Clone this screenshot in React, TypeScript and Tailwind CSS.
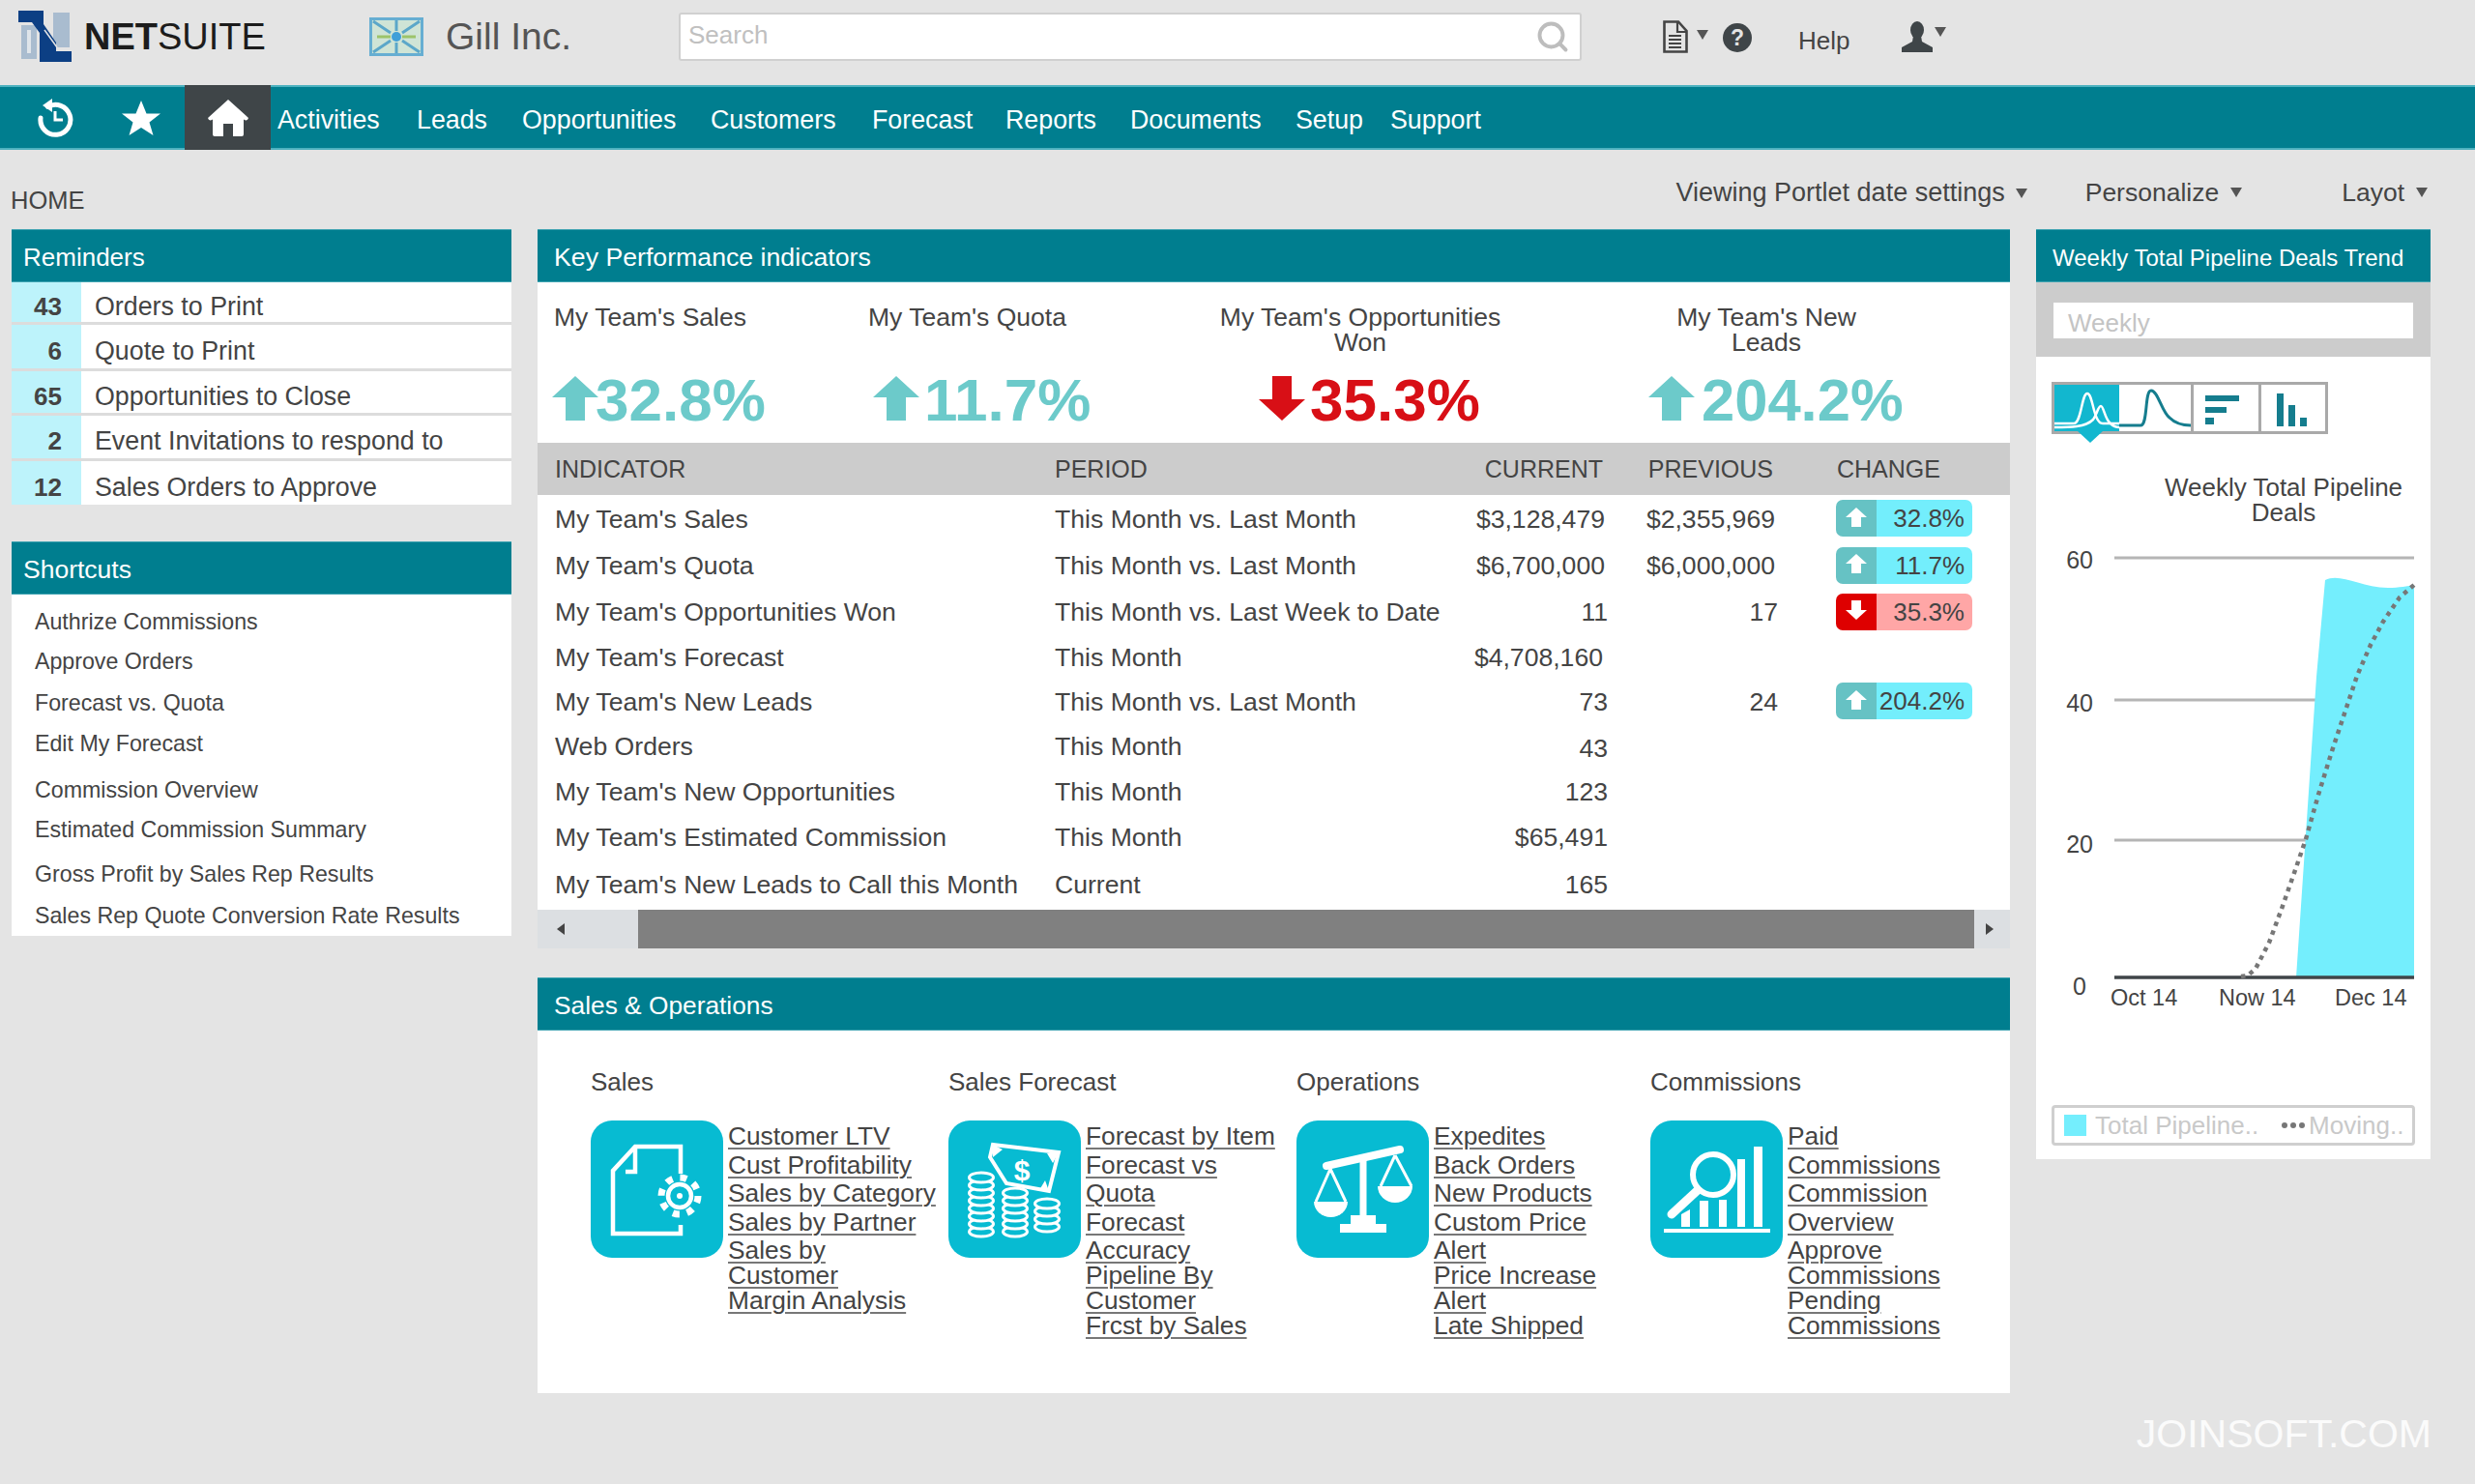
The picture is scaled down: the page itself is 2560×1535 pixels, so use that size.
import React from "react";
import { Search } from "lucide-react";

const TILE = "#07bbd2";

function Caret({ className = "" }: { className?: string }) {
  return (
    <svg viewBox="0 0 12 10" className={`w-[12px] h-[10px] shrink-0 ${className}`}>
      <polygon points="0,0 12,0 6,10" fill="#555" />
    </svg>
  );
}

function NetsuiteLogo() {
  return (
    <svg viewBox="0 0 56 54" className="w-[56px] h-[54px] shrink-0">
      <path d="M3 15H19V50H3Z" fill="#a9bccf" />
      <path d="M36 2H53V38H36Z" fill="#a9bccf" />
      <path d="M9 20H13V44H9Z" fill="#dfe5ea" />
      <path d="M0 0H26V14L39 33V42H55V53H22V23L14 12H0Z" fill="#0c3f84" />
      <path d="M27 20 L40 38" stroke="#e4e4e4" strokeWidth="1.5" fill="none" />
    </svg>
  );
}

function GillLogo() {
  return (
    <svg viewBox="0 0 56 40" className="w-[56px] h-[40px] shrink-0">
      <rect x="1.5" y="1.5" width="53" height="37" fill="#cfe4d6" stroke="#66aed2" strokeWidth="3" />
      <g stroke="#5ba7c9" strokeWidth="3">
        <path d="M4 4L22 16M52 4L34 16M4 36L22 24M52 36L34 24M28 3V14M28 37V26" />
      </g>
      <g stroke="#9cc46a" strokeWidth="3">
        <path d="M8 20H22M34 20H48" />
      </g>
      <circle cx="28" cy="20" r="5" fill="#3f9fd8" />
    </svg>
  );
}

function DocIcon() {
  return (
    <svg viewBox="0 0 26 34" className="w-[26px] h-[34px] shrink-0">
      <path d="M1.5 1.5H16L24.5 11V32.5H1.5Z" fill="none" stroke="#444" strokeWidth="2.6" />
      <path d="M15 2V12H24" fill="none" stroke="#444" strokeWidth="2.2" />
      <path d="M6 16H19M6 20H19M6 24H19M6 28H19" stroke="#444" strokeWidth="2.2" />
    </svg>
  );
}

function HelpIcon() {
  return (
    <svg viewBox="0 0 30 30" className="w-[30px] h-[30px] shrink-0">
      <circle cx="15" cy="15" r="15" fill="#3f4548" />
      <text x="15" y="23" textAnchor="middle" fontSize="23" fontWeight="700" fill="#e4e4e4" fontFamily="Liberation Sans, sans-serif">?</text>
    </svg>
  );
}

function UserIcon() {
  return (
    <svg viewBox="0 0 32 32" className="w-[32px] h-[32px] shrink-0">
      <ellipse cx="16" cy="9" rx="7" ry="9" fill="#3f4548" />
      <path d="M12 15H20L21 21L32 27V32H0V27L11 21Z" fill="#3f4548" />
    </svg>
  );
}

function HistoryIcon() {
  return (
    <svg viewBox="0 0 38 40" className="w-[38px] h-[40px]">
      <path d="M11.5 8.5A15.5 15.5 0 1 1 4 20" fill="none" stroke="#fff" strokeWidth="5" strokeLinecap="round" />
      <polygon points="6,7 16,0 16,14" fill="#fff" />
      <path d="M19 13V22H27" fill="none" stroke="#fff" strokeWidth="3" />
    </svg>
  );
}

function StarIcon() {
  return (
    <svg viewBox="0 0 40 36" className="w-[40px] h-[36px]">
      <polygon points="20,0 25.5,13.5 40,13.5 28.5,22.5 32.5,36 20,28 7.5,36 11.5,22.5 0,13.5 14.5,13.5" fill="#fff" />
    </svg>
  );
}

function HomeIcon() {
  return (
    <svg viewBox="0 0 42 38" className="w-[42px] h-[38px]">
      <path d="M21 0L42 19Q41 23 37 20.5V36Q37 38 35 38H26V25H16V38H7Q5 38 5 36V20.5Q1 23 0 19Z" fill="#fff" />
    </svg>
  );
}

function BigArrow({ color, down = false }: { color: string; down?: boolean }) {
  return (
    <svg viewBox="0 0 48 46" className="w-[48px] h-[46px] shrink-0 -mt-[4px]">
      {down ? (
        <polygon points="14,0 34,0 34,24 48,24 24,46 0,24 14,24" fill={color} />
      ) : (
        <polygon points="24,0 48,22 34,22 34,46 14,46 14,22 0,22" fill={color} />
      )}
    </svg>
  );
}

function SmallArrow({ down = false }: { down?: boolean }) {
  return (
    <svg viewBox="0 0 22 20" className="w-[22px] h-[20px] -mt-[3px]">
      {down ? (
        <polygon points="6,0 16,0 16,10 22,10 11,20 0,10 6,10" fill="#fff" />
      ) : (
        <polygon points="11,0 22,10 16,10 16,20 6,20 6,10 0,10" fill="#fff" />
      )}
    </svg>
  );
}

function PanelHeader({ title, cls }: { title: string; cls: string }) {
  return (
    <div className={`h-[55px] bg-[#007e8f] border-y border-[#3fa3b1] flex items-center pt-[4px] text-white ${cls}`}>
      {title}
    </div>
  );
}

const reminders = [
  { n: "43", t: "Orders to Print", cls: "h-[44px] border-b-[3px]" },
  { n: "6", t: "Quote to Print", cls: "h-[48px] border-b-[3px]" },
  { n: "65", t: "Opportunities to Close", cls: "h-[46px] border-b-[3px]" },
  { n: "2", t: "Event Invitations to respond to", cls: "h-[47px] border-b-[3px]" },
  { n: "12", t: "Sales Orders to Approve", cls: "h-[45px]" },
];

const shortcuts = [
  { t: "Authrize Commissions", cls: "mt-[13px]" },
  { t: "Approve Orders", cls: "mt-[11px]" },
  { t: "Forecast vs. Quota", cls: "mt-[13px]" },
  { t: "Edit My Forecast", cls: "mt-[12px]" },
  { t: "Commission Overview", cls: "mt-[18px]" },
  { t: "Estimated Commission Summary", cls: "mt-[11px]" },
  { t: "Gross Profit by Sales Rep Results", cls: "mt-[16px]" },
  { t: "Sales Rep Quote Conversion Rate Results", cls: "mt-[13px]" },
];

type Badge = { v: string; down?: boolean };
const rows: { a: string; p: string; c: string; pr?: string; b?: Badge; h: string; cCls?: string; prCls?: string }[] = [
  { a: "My Team's Sales", p: "This Month vs. Last Month", c: "$3,128,479", pr: "$2,355,969", b: { v: "32.8%" }, h: "h-[49px]" },
  { a: "My Team's Quota", p: "This Month vs. Last Month", c: "$6,700,000", pr: "$6,000,000", b: { v: "11.7%" }, h: "h-[48px]" },
  { a: "My Team's Opportunities Won", p: "This Month vs. Last Week to Date", c: "11", pr: "17", b: { v: "35.3%", down: true }, h: "h-[48px]", cCls: "-mr-[3px]", prCls: "-mr-[3px]" },
  { a: "My Team's Forecast", p: "This Month", c: "$4,708,160", h: "h-[45px]", cCls: "mr-[2px]" },
  { a: "My Team's New Leads", p: "This Month vs. Last Month", c: "73", pr: "24", b: { v: "204.2%" }, h: "h-[47px]", cCls: "-mr-[3px]", prCls: "-mr-[3px]" },
  { a: "Web Orders", p: "This Month", c: "43", h: "h-[46px]", cCls: "-mr-[3px] pt-[5px]" },
  { a: "My Team's New Opportunities", p: "This Month", c: "123", h: "h-[48px]", cCls: "-mr-[3px]" },
  { a: "My Team's Estimated Commission", p: "This Month", c: "$65,491", h: "h-[46px]", cCls: "-mr-[3px]" },
  { a: "My Team's New Leads to Call this Month", p: "Current", c: "165", h: "h-[52px]", cCls: "-mr-[3px]" },
];

const sections = [
  {
    title: "Sales",
    w: "w-[370px]",
    icon: <SalesTile />,
    lines: ["Customer LTV", "Cust Profitability", "Sales by Category", "Sales by Partner", "Sales by", "Customer", "Margin Analysis"],
  },
  {
    title: "Sales Forecast",
    w: "w-[360px]",
    icon: <ForecastTile />,
    lines: ["Forecast by Item", "Forecast vs", "Quota", "Forecast", "Accuracy", "Pipeline By", "Customer", "Frcst by Sales"],
  },
  {
    title: "Operations",
    w: "w-[366px]",
    icon: <ScaleTile />,
    lines: ["Expedites", "Back Orders", "New Products", "Custom Price", "Alert", "Price Increase", "Alert", "Late Shipped"],
  },
  {
    title: "Commissions",
    w: "w-[360px]",
    icon: <CommissionTile />,
    lines: ["Paid", "Commissions", "Commission", "Overview", "Approve", "Commissions", "Pending", "Commissions"],
  },
];

function TileShell({ children }: { children: React.ReactNode }) {
  return (
    <svg viewBox="0 0 137 142" className="w-[137px] h-[142px] shrink-0">
      <rect width="137" height="142" rx="22" fill={TILE} />
      {children}
    </svg>
  );
}

function SalesTile() {
  return (
    <TileShell>
      <g fill="none" stroke="#fff" strokeWidth="4.5">
        <path d="M93 55V27H46L23 52V117H93V108" />
        <path d="M46 27V53H36" />
        <circle cx="92" cy="78" r="12" />
        <circle cx="92" cy="78" r="19" strokeWidth="7" strokeDasharray="7 7.9" />
      </g>
      <circle cx="92" cy="78" r="3" fill="#fff" />
    </TileShell>
  );
}

function Coins({ x, top, bottom }: { x: number; top: number; bottom: number }) {
  const ys: number[] = [];
  for (let y = bottom - 5; y >= top + 5; y -= 8) ys.push(y);
  return (
    <g fill={TILE} stroke="#fff" strokeWidth="3">
      {ys.map((y) => (
        <ellipse key={y} cx={x} cy={y} rx="12.5" ry="5" />
      ))}
    </g>
  );
}

function ForecastTile() {
  return (
    <TileShell>
      <path d="M46 25L114 33L104 73L60 65L43 38Z" fill="none" stroke="#fff" strokeWidth="4" />
      <path d="M46 25L56 30L46 38Z M114 33L108 44L102 34Z M104 73L94 72L100 62Z" fill="#fff" />
      <text x="76" y="62" textAnchor="middle" fontSize="30" fill="#fff" fontFamily="Liberation Sans, sans-serif" fontWeight="700">$</text>
      <Coins x={34} top={47} bottom={120} />
      <Coins x={69} top={68} bottom={120} />
      <Coins x={102} top={78} bottom={115} />
    </TileShell>
  );
}

function ScaleTile() {
  return (
    <TileShell>
      <path d="M31 47L107 30" stroke="#fff" strokeWidth="8" strokeLinecap="round" />
      <path d="M69 36V100" stroke="#fff" strokeWidth="7" />
      <path d="M56 98H82V107H93V116H45V107H56Z" fill="#fff" />
      <g fill="none" stroke="#fff" strokeWidth="3">
        <path d="M35 50L20 84M35 50L51 84M102 36L87 68M102 36L119 68" />
      </g>
      <path d="M18 84H53A17.5 16 0 0 1 18 84Z" fill="#fff" />
      <path d="M84 68H120A18 17 0 0 1 84 68Z" fill="#fff" />
    </TileShell>
  );
}

function CommissionTile() {
  return (
    <TileShell>
      <rect x="14" y="112" width="110" height="4" fill="#fff" />
      <path d="M32 110V97L41 92V110ZM51 110V83H60V110ZM71 110V82H79V110ZM90 110V40H98V110ZM107 110V27H116V110Z" fill="#fff" />
      <circle cx="65" cy="56" r="21" fill={TILE} stroke="#fff" strokeWidth="6" />
      <path d="M48 73L22 97" stroke="#fff" strokeWidth="9" strokeLinecap="round" />
    </TileShell>
  );
}

function LinkLine({ text, spaced }: { text: string; spaced: boolean }) {
  return (
    <div className={`h-[26px] leading-[26px] whitespace-nowrap ${spaced ? "mt-[3.5px]" : ""}`}>
      <a className="underline decoration-[#777] decoration-2 underline-offset-[3px] text-[#444] text-[26.3px]">{text}</a>
    </div>
  );
}

function ChartTabs() {
  return (
    <div className="relative flex w-[286px] h-[54px] ml-[16px] mt-[26px] border-[3px] border-[#a9a9a9]">
      <div className="w-[67px] h-full bg-[#12b7cf]">
        <svg viewBox="0 0 67 48" className="w-full h-full">
          <path d="M0 40H20C28 40 28 9 34 9C40 9 40 40 50 40H67" fill="none" stroke="#fff" strokeWidth="2.5" />
          <path d="M0 44C16 44 32 44 40 36C44 31 45 22 48 22C51 22 52 36 58 40C60 42 64 44 67 44" fill="none" stroke="#fff" strokeWidth="2.5" />
        </svg>
      </div>
      <div className="w-[74px] h-full">
        <svg viewBox="0 0 74 48" className="w-full h-full">
          <path d="M0 42H22C30 42 26 6 33 6C40 6 44 28 52 34C58 40 64 42 74 42" fill="none" stroke="#157d8e" strokeWidth="3" />
        </svg>
      </div>
      <div className="w-[70px] h-full border-l-[3px] border-[#a9a9a9]">
        <svg viewBox="0 0 67 48" className="w-full h-full">
          <path d="M12 11H47V17H12ZM12 23H34V29H12ZM12 34H21V41H12Z" fill="#157d8e" />
        </svg>
      </div>
      <div className="flex-1 h-full border-l-[3px] border-[#a9a9a9]">
        <svg viewBox="0 0 66 48" className="w-full h-full">
          <path d="M16 9H23V43H16ZM28 21H35V43H28ZM40 34H47V43H40Z" fill="#157d8e" />
        </svg>
      </div>
      <svg viewBox="0 0 26 12" className="absolute left-[24px] top-[48px] w-[26px] h-[12px]">
        <polygon points="0,0 26,0 13,12" fill="#12b7cf" />
      </svg>
    </div>
  );
}

function TrendChart() {
  return (
    <svg viewBox="2106 560 408 490" className="w-[408px] h-[490px] mt-[17px]" fontFamily="Liberation Sans, sans-serif">
      <g stroke="#b5b5b5" strokeWidth="3">
        <path d="M2187 577H2497M2187 724H2497M2187 869H2497" />
      </g>
      <path d="M2375 1011L2396 700L2405 600C2420 592 2440 607 2470 608C2482 608 2490 606 2497 605V1011Z" fill="#74eefd" />
      <path d="M2187 1011H2497" stroke="#3f4548" strokeWidth="3.5" />
      <path
        d="M2318 1010L2325 1009L2333 1002L2347 975L2360 940L2373 903L2385 868L2398 822L2412 777L2425 738L2438 699L2452 667L2465 643L2482 618L2497 605"
        fill="none"
        stroke="#777"
        strokeWidth="4.5"
        strokeDasharray="4.5 5"
      />
      <g fontSize="25" fill="#444" textAnchor="end">
        <text x="2165" y="588">60</text>
        <text x="2165" y="736">40</text>
        <text x="2165" y="882">20</text>
        <text x="2158" y="1029">0</text>
      </g>
      <g fontSize="23.5" fill="#444">
        <text x="2183" y="1040">Oct 14</text>
        <text x="2295" y="1040">Now 14</text>
        <text x="2415" y="1040">Dec 14</text>
      </g>
    </svg>
  );
}

export default function App() {
  return (
    <div className="relative min-h-[1535px] overflow-hidden bg-[#e4e4e4] text-[#444] font-['Liberation_Sans',Arial,sans-serif]">
      {/* top bar */}
      <header className="h-[88px] flex items-center pb-[13px] pl-[19px]">
        <NetsuiteLogo />
        <div className="ml-[12px] text-[38px] leading-none text-[#1c1c1c] whitespace-nowrap w-[295px]">
          <span className="font-bold">NET</span>SUITE
        </div>
        <GillLogo />
        <div className="ml-[23px] w-[241px] text-[39px] leading-none text-[#555]">Gill Inc.</div>
        <div className="w-[934px] h-[50px] bg-white border-2 border-[#d0d0d0] rounded-[3px] flex items-center justify-between pl-[8px] pr-[10px]">
          <span className="text-[26px] text-[#c0c0c0] -mt-[2px]">Search</span>
          <Search className="w-[36px] h-[36px] text-[#bdbdbd]" strokeWidth={2.6} />
        </div>
        <div className="ml-[84px] flex items-center">
          <DocIcon />
          <Caret className="ml-[9px] -mt-[4px]" />
        </div>
        <div className="ml-[15px] mt-[3px]"><HelpIcon /></div>
        <div className="ml-[48px] mt-[10px] text-[26px]">Help</div>
        <div className="ml-[54px] flex items-center">
          <UserIcon />
          <Caret className="ml-[2px] -mt-[10px]" />
        </div>
      </header>

      {/* nav */}
      <nav className="h-[67px] bg-[#007e8f] border-y-2 border-[#4db1bf] flex items-center text-white text-[26.8px] leading-none">
        <div className="ml-[38px] w-[88px]"><HistoryIcon /></div>
        <div className="w-[65px]"><StarIcon /></div>
        <div className="w-[89px] h-[67px] -my-[2px] bg-[#3f4548] flex items-center justify-center"><HomeIcon /></div>
        <a className="ml-[7px] w-[144px] pt-[5px]">Activities</a>
        <a className="w-[109px] pt-[5px]">Leads</a>
        <a className="w-[195px] pt-[5px]">Opportunities</a>
        <a className="w-[167px] pt-[5px]">Customers</a>
        <a className="w-[138px] pt-[5px]">Forecast</a>
        <a className="w-[129px] pt-[5px]">Reports</a>
        <a className="w-[171px] pt-[5px]">Documents</a>
        <a className="w-[98px] pt-[5px]">Setup</a>
        <a className="pt-[5px]">Support</a>
      </nav>

      {/* toolbar */}
      <div className="h-[82px] flex items-start text-[26.5px] leading-none">
        <div className="ml-[11px] mt-[40px] text-[25.5px]">HOME</div>
        <div className="ml-auto mt-[31px] flex items-center text-[27px]">
          <span>Viewing Portlet date settings</span>
          <Caret className="ml-[11px]" />
        </div>
        <div className="ml-[60px] mt-[31px] flex items-center">
          <span>Personalize</span>
          <Caret className="ml-[12px]" />
        </div>
        <div className="ml-[103px] mt-[31px] mr-[49px] flex items-center">
          <span>Layot</span>
          <Caret className="ml-[12px]" />
        </div>
      </div>

      {/* columns */}
      <main className="flex items-start pl-[12px]">
        {/* left */}
        <div className="w-[517px] shrink-0">
          <PanelHeader title="Reminders" cls="pl-[12px] text-[26px]" />
          <div className="bg-white">
            {reminders.map((r) => (
              <div key={r.t} className={`flex items-center border-[#dcdcdc] ${r.cls}`}>
                <div className="w-[72px] h-full bg-[#bdf3fb] flex items-center justify-end pt-[9px] pr-[20px] font-bold text-[26px]">{r.n}</div>
                <div className="ml-[14px] pt-[9px] text-[26.8px]">{r.t}</div>
              </div>
            ))}
          </div>
          <div className="mt-[38px]">
            <PanelHeader title="Shortcuts" cls="pl-[12px] text-[26.5px]" />
            <div className="bg-white h-[353px] pl-[24px] text-[23.2px] leading-[30px] overflow-hidden">
              {shortcuts.map((s) => (
                <div key={s.t} className={s.cls}>{s.t}</div>
              ))}
            </div>
          </div>
        </div>

        {/* center */}
        <div className="ml-[27px] w-[1523px] shrink-0">
          <PanelHeader title="Key Performance indicators" cls="pl-[17px] text-[26.7px]" />
          <div className="bg-white">
            <div className="flex h-[166px] pl-[15px] text-[26.5px] leading-[26px]">
              <div className="w-[327px] shrink-0">
                <div className="h-[92px] pt-[23px] pl-[2px]">My Team's Sales</div>
                <div className="h-[60px] flex items-center">
                  <BigArrow color="#6ccaca" />
                  <span className="-ml-[3px] text-[62px] font-bold leading-none text-[#6ccaca]">32.8%</span>
                </div>
              </div>
              <div className="w-[363px] shrink-0">
                <div className="h-[92px] pt-[23px]">My Team's Quota</div>
                <div className="h-[60px] flex items-center pl-[5px]">
                  <BigArrow color="#6ccaca" />
                  <span className="ml-[5px] text-[62px] font-bold leading-none text-[#6ccaca]">11.7%</span>
                </div>
              </div>
              <div className="w-[389px] shrink-0">
                <div className="h-[92px] pt-[23px] w-[292px] text-center">My Team's Opportunities Won</div>
                <div className="h-[60px] flex items-center pl-[41px]">
                  <BigArrow color="#d80f16" down />
                  <span className="ml-[5px] text-[62px] font-bold leading-none text-[#d80f16]">35.3%</span>
                </div>
              </div>
              <div className="flex-1">
                <div className="h-[92px] pt-[23px] ml-[77px] w-[200px] text-center">My Team's New Leads</div>
                <div className="h-[60px] flex items-center pl-[55px]">
                  <BigArrow color="#6ccaca" />
                  <span className="ml-[7px] text-[61.5px] font-bold leading-none text-[#6ccaca]">204.2%</span>
                </div>
              </div>
            </div>
            <div className="h-[54px] bg-[#cccccc] pt-[2px] grid grid-cols-[535px_400px_167px_176px_245px] items-center text-[25px]">
              <div className="pl-[18px]">INDICATOR</div>
              <div>PERIOD</div>
              <div className="text-right">CURRENT</div>
              <div className="text-right">PREVIOUS</div>
              <div className="pl-[66px]">CHANGE</div>
            </div>
            {rows.map((r) => (
              <div key={r.a} className={`grid grid-cols-[535px_400px_169px_176px_243px] items-center text-[26.6px] ${r.h}`}>
                <div className="pl-[18px] pt-[2px] whitespace-nowrap">{r.a}</div>
                <div className="pt-[2px] whitespace-nowrap">{r.p}</div>
                <div className={`text-right pt-[2px] ${r.cCls ?? ""}`}>{r.c}</div>
                <div className={`text-right pt-[2px] ${r.prCls ?? ""}`}>{r.pr}</div>
                <div className="pl-[63px]">
                  {r.b && (
                    <div className="w-[141px] h-[38px] -mt-[1px] rounded-[7px] overflow-hidden flex text-[26px] leading-[38px]">
                      <div className={`w-[42px] flex items-center justify-center ${r.b.down ? "bg-[#de0000]" : "bg-[#66c2c4]"}`}>
                        <SmallArrow down={r.b.down} />
                      </div>
                      <div className={`flex-1 text-right pr-[8px] ${r.b.down ? "bg-[#ffa6a6]" : "bg-[#73eefc]"}`}>{r.b.v}</div>
                    </div>
                  )}
                </div>
              </div>
            ))}
            <div className="h-[40px] bg-[#dcdfe2] flex items-center">
              <div className="w-[104px] pl-[20px]">
                <svg viewBox="0 0 8 12" className="w-[8px] h-[12px]"><polygon points="8,0 8,12 0,6" fill="#444" /></svg>
              </div>
              <div className="w-[1382px] h-full bg-[#808080]" />
              <div className="flex-1 pl-[12px]">
                <svg viewBox="0 0 8 12" className="w-[8px] h-[12px]"><polygon points="0,0 0,12 8,6" fill="#444" /></svg>
              </div>
            </div>
          </div>

          <div className="mt-[30px]">
            <PanelHeader title="Sales & Operations" cls="pl-[17px] text-[26.3px]" />
            <div className="bg-white h-[375px] pl-[55px] flex">
              {sections.map((s) => (
                <div key={s.title} className={`${s.w} shrink-0`}>
                  <div className="mt-[38px] mb-[25px] h-[30px] leading-[30px] text-[26px]">{s.title}</div>
                  <div className="flex">
                    {s.icon}
                    <div className="ml-[5px] pt-[3px]">
                      {s.lines.map((l, i) => (
                        <LinkLine key={i} text={l} spaced={i >= 1 && i <= 4} />
                      ))}
                    </div>
                  </div>
                </div>
              ))}
            </div>
          </div>
        </div>

        {/* right */}
        <div className="ml-[27px] w-[408px] shrink-0">
          <PanelHeader title="Weekly Total Pipeline Deals Trend" cls="pl-[17px] text-[24px]" />
          <div className="h-[77px] bg-[#cccccc] pt-[21px] pl-[18px]">
            <div className="w-[372px] h-[37px] bg-white pl-[15px] text-[26px] leading-[43px] text-[#c4c4c4]">Weekly</div>
          </div>
          <div className="bg-white h-[830px] overflow-hidden">
            <ChartTabs />
            <div className="mt-[43px] ml-[130px] w-[252px] text-center text-[26px] leading-[25.5px]">Weekly Total Pipeline Deals</div>
            <TrendChart />
            <div className="mt-[93px] ml-[16px] w-[376px] h-[42px] border-[3px] border-[#cfcfcf] rounded-[4px] flex items-center pl-[10px] text-[26px] text-[#c9c9c9] whitespace-nowrap">
              <div className="w-[23px] h-[22px] bg-[#74eefd]" />
              <span className="ml-[9px]">Total Pipeline..</span>
              <span className="ml-[24px] flex gap-[3px]">
                <i className="w-[6px] h-[6px] rounded-full bg-[#777]" />
                <i className="w-[6px] h-[6px] rounded-full bg-[#777]" />
                <i className="w-[6px] h-[6px] rounded-full bg-[#777]" />
              </span>
              <span className="ml-[4px]">Moving..</span>
            </div>
          </div>
        </div>
      </main>

      <div className="absolute right-[45px] bottom-[31px] text-[41px] leading-none text-white/85">JOINSOFT.COM</div>
    </div>
  );
}
